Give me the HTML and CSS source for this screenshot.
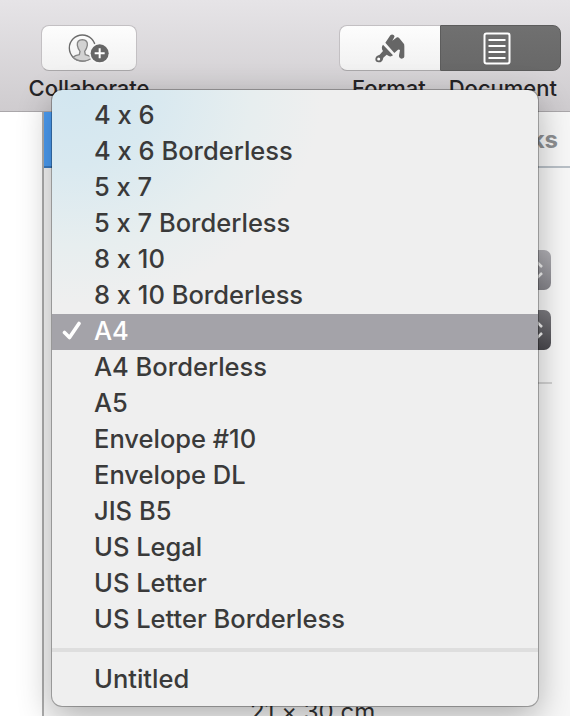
FILE: index.html
```html
<!DOCTYPE html>
<html lang="en">
<head>
    <meta charset="UTF-8">
    <meta name="viewport" content="width=device-width, initial-scale=1.0">
    <title>Document setup</title>
    <link rel="stylesheet" href="styles.css">
</head>
<body>
    <header class="toolbar">
        <div class="tool collaborate">
            <button class="btn">
                <svg width="42" height="31" viewBox="0 0 126 93">
                    <circle cx="43" cy="45" r="39" fill="none" stroke="#6b6b6b" stroke-width="4"/>
                    <path d="M15 73 Q21 67 34 65 L36 55 Q30 48 28 37 Q26 21 43 20 Q60 21 58 37 Q56 48 50 55 L52 65 Q64 68 72 74 Q60 84 43 84 Q26 84 15 73Z" fill="#d2d2d2" stroke="#858585" stroke-width="4"/>
                    <circle cx="95" cy="61" r="32" fill="#f7f7f7"/>
                    <circle cx="95" cy="61" r="27" fill="#666"/>
                    <path d="M80 61h30M95 46v30" stroke="#fff" stroke-width="6"/>
                </svg>
            </button>
            <span class="label">Collaborate</span>
        </div>
        <div class="tool inspector">
            <div class="segments">
                <button class="segment">
                    <svg width="32" height="31" viewBox="0 0 96 93" fill="#666">
                        <path d="M34 29 L49 7 Q54 2 59 6 Q64 9 60 14 L55 23 L69 13 Q73 12 76 16 L87 29 Q92 33 91 40 V67 Q92 77 83 77 Q74 76 75 67 L78 52 Q76 48 72 50 L61 60Z"/>
                        <path d="M27 35 L57 67 Q50 73 43 68 L38 65 L28 74 Q26 88 14 88 Q4 88 4 78 Q5 68 17 65 L27 54 Q20 44 27 35Z"/>
                        <circle cx="14" cy="78" r="4.5" fill="#fff"/>
                    </svg>
                </button>
                <button class="segment active">
                    <svg width="28" height="33" viewBox="0 0 28 33" fill="none" stroke="#fff" stroke-width="2">
                        <rect x="1.5" y="1.5" width="25" height="30" rx="2"/>
                        <path d="M5.5 8h17M5.5 14h17M5.5 20h17M5.5 26h17"/>
                    </svg>
                </button>
            </div>
            <div class="labels">
                <span class="label">Format</span>
                <span class="label">Document</span>
            </div>
        </div>
    </header>

    <main class="workspace">
        <div class="canvas"></div>
        <aside class="sidebar">
            <div class="tabs">
                <span class="tab selected"></span>
                <span class="tab">Bookmarks</span>
            </div>
            <div class="settings">
                <div class="select">
                    <svg width="18" height="20" viewBox="0 0 18 20"><path d="M4 7l5-5 5 5M4 13l5 5 5-5"/></svg>
                </div>
                <div class="select dark">
                    <svg width="18" height="20" viewBox="0 0 18 20"><path d="M4 7l5-5 5 5M4 13l5 5 5-5"/></svg>
                </div>
            </div>
            <p class="dimensions">21 × 30 cm</p>
        </aside>
    </main>

    <ul class="menu">
        <li>4 x 6</li>
        <li>4 x 6 Borderless</li>
        <li>5 x 7</li>
        <li>5 x 7 Borderless</li>
        <li>8 x 10</li>
        <li>8 x 10 Borderless</li>
        <li class="checked">
            <svg class="check" width="20" height="20" viewBox="0 0 20 20"><path d="M2.5 12.5l5 5L17 3.5"/></svg>A4
        </li>
        <li>A4 Borderless</li>
        <li>A5</li>
        <li>Envelope #10</li>
        <li>Envelope DL</li>
        <li>JIS B5</li>
        <li>US Legal</li>
        <li>US Letter</li>
        <li>US Letter Borderless</li>
        <li class="separator"></li>
        <li>Untitled</li>
    </ul>
</body>
</html>
```
FILE: styles.css
```css
* {
    box-sizing: border-box;
}
body {
    margin: 0;
    height: 716px;
    display: flex;
    flex-direction: column;
    position: relative;
    overflow: hidden;
    font-family: Inter, "Liberation Sans", sans-serif;
    font-feature-settings: "calt" 0;
    background: #fff;
}
.toolbar {
    height: 112px;
    flex: none;
    padding: 25px 9px 0 29px;
    display: flex;
    justify-content: space-between;
    background: linear-gradient(#e6e4e7, #cfcccf);
    border-bottom: 1px solid #aaa7aa;
}
.tool {
    display: flex;
    flex-direction: column;
}
.collaborate {
    width: 120px;
    align-items: center;
}
button {
    padding: 0;
    border: 0;
    display: flex;
    align-items: center;
    justify-content: center;
}
.btn {
    width: 96px;
    height: 46px;
    border: 1px solid #c3c0c3;
    border-bottom-color: #aaa8aa;
    border-radius: 8px;
    background: linear-gradient(#fdfdfd, #f1f1f1);
}
.segments {
    display: flex;
    width: 222px;
    height: 46px;
}
.segment {
    width: 101px;
    border: 1px solid #c3c0c3;
    border-right: 0;
    border-bottom-color: #aaa8aa;
    border-radius: 8px 0 0 8px;
    background: linear-gradient(#fdfdfd, #f1f1f1);
}
.segment.active {
    width: 121px;
    padding-right: 7px;
    border: 1px solid #5c5c5c;
    border-radius: 0 8px 8px 0;
    background: linear-gradient(#707070, #686868);
}
.label {
    margin-top: 4px;
    font-size: 22px;
    font-weight: 450;
    line-height: 26px;
    color: #262426;
    white-space: nowrap;
}
.labels {
    display: flex;
    justify-content: space-between;
    padding: 0 4px 0 13px;
}
.workspace {
    flex: 1;
    display: flex;
}
.canvas {
    width: 42px;
    background: #fff;
}
.sidebar {
    flex: 1;
    display: flex;
    flex-direction: column;
    border-left: 2px solid #adadad;
    background: #f7f7f7;
}
.tabs {
    display: flex;
    justify-content: space-between;
    height: 56px;
    padding-right: 12px;
    border-bottom: 2px solid #b9c0c7;
}
.tab {
    font-size: 24px;
    font-weight: 700;
    line-height: 56px;
    color: #8d8f91;
}
.tab.selected {
    width: 176px;
    height: 56px;
    background: #4c9ef5;
    border-bottom: 2px solid #3a7cc4;
}
.settings {
    display: flex;
    flex-direction: column;
    align-items: flex-end;
    gap: 20px;
    margin: 82px 18px 0 30px;
    padding: 0 1px 32px 0;
    border-bottom: 2px solid #d3d3d3;
}
.select {
    width: 32px;
    height: 40px;
    padding: 10px 0 0 9px;
    border-radius: 7px;
    background: linear-gradient(#b1b0b5, #85848a);
}
.select.dark {
    background: linear-gradient(#7c7b80, #4a494e);
}
.select svg {
    display: block;
    fill: none;
    stroke: #f2f2f2;
    stroke-width: 2.5;
}
.dimensions {
    margin: 313px 0 0 206px;
    font-size: 24px;
    line-height: 30px;
    white-space: nowrap;
    color: #333;
}
.menu {
    position: absolute;
    top: 90px;
    left: 52px;
    width: 486px;
    height: 616px;
    margin: 0;
    padding: 8px 0;
    overflow: hidden;
    list-style: none;
    border-radius: 10px;
    background: radial-gradient(ellipse 250px 215px at 20px 0, #d2e6f0, #d9e9f0 35%, #e7eeef 72%, #efefef) #efefef;
    box-shadow: 0 0 0 1px rgba(0, 0, 0, 0.28), 0 10px 34px rgba(0, 0, 0, 0.3);
    font-size: 25.5px;
    font-weight: 450;
    color: #3a3a3a;
}
.menu li {
    display: flex;
    align-items: center;
    height: 36px;
    padding: 0 0 4px 42px;
    white-space: nowrap;
}
.menu .checked {
    padding-left: 10px;
    background: #a4a3a9;
    color: #fff;
}
.check {
    margin-right: 12px;
    fill: none;
    stroke: #fff;
    stroke-width: 3.6;
    stroke-linecap: round;
    stroke-linejoin: round;
}
.menu .separator {
    height: 4px;
    margin: 10px 0;
    padding: 0;
    background: #dedede;
}
```
